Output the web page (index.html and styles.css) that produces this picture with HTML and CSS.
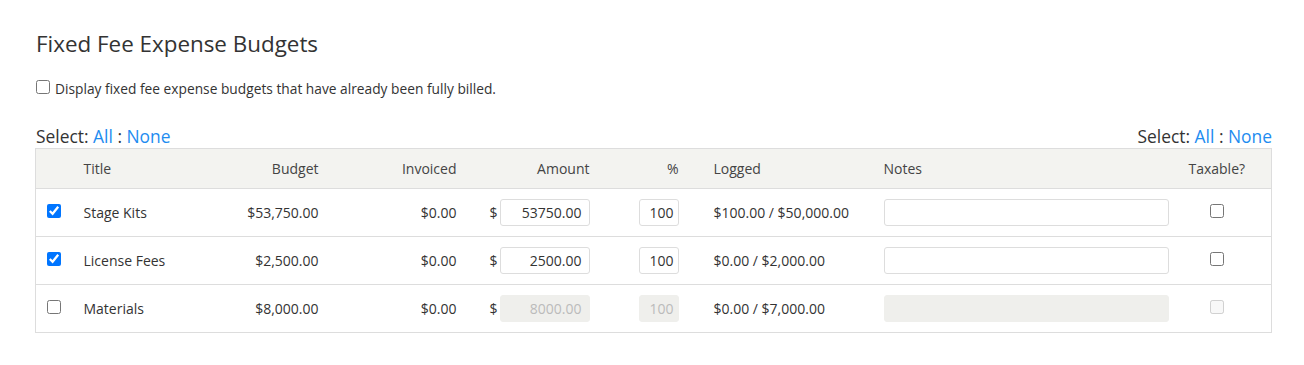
FILE: index.html
```html
<!DOCTYPE html>
<html lang="en">
  <head>
    <meta charset="UTF-8" />
    <title>Fixed Fee Expense Budgets</title>
    <link rel="stylesheet" href="styles.css">
  </head>
  <body>
    <div class="budgets">
      <h2 class="budgets__title">Fixed Fee Expense Budgets</h2>

      <label class="budgets__toggle">
        <input type="checkbox" />
        Display fixed fee expense budgets that have already been fully billed.
      </label>

      <div class="select-bar">
        <span>Select: <a href="#">All</a> : <a href="#">None</a></span>
        <span>Select: <a href="#">All</a> : <a href="#">None</a></span>
      </div>

      <table class="budget-table">
        <thead>
          <tr>
            <th class="col-check"></th>
            <th class="col-title">Title</th>
            <th class="col-budget num">Budget</th>
            <th class="col-invoiced num">Invoiced</th>
            <th class="col-amount num">Amount</th>
            <th class="col-pct num">%</th>
            <th class="col-logged">Logged</th>
            <th class="col-notes">Notes</th>
            <th class="col-tax">Taxable?</th>
          </tr>
        </thead>
        <tbody>
          <tr>
            <td class="col-check"><input type="checkbox" checked /></td>
            <td>Stage Kits</td>
            <td class="num">$53,750.00</td>
            <td class="num">$0.00</td>
            <td class="num"><span class="money"><span class="cur">$</span><input class="field field--amount" type="text" value="53750.00" /></span></td>
            <td class="col-pct num"><input class="field field--pct" type="text" value="100" /></td>
            <td class="col-logged">$100.00 / $50,000.00</td>
            <td><input class="field field--notes" type="text" /></td>
            <td class="col-tax"><input type="checkbox" /></td>
          </tr>
          <tr>
            <td class="col-check"><input type="checkbox" checked /></td>
            <td>License Fees</td>
            <td class="num">$2,500.00</td>
            <td class="num">$0.00</td>
            <td class="num"><span class="money"><span class="cur">$</span><input class="field field--amount" type="text" value="2500.00" /></span></td>
            <td class="col-pct num"><input class="field field--pct" type="text" value="100" /></td>
            <td class="col-logged">$0.00 / $2,000.00</td>
            <td><input class="field field--notes" type="text" /></td>
            <td class="col-tax"><input type="checkbox" /></td>
          </tr>
          <tr>
            <td class="col-check"><input type="checkbox" /></td>
            <td>Materials</td>
            <td class="num">$8,000.00</td>
            <td class="num">$0.00</td>
            <td class="num"><span class="money"><span class="cur">$</span><input class="field field--amount" type="text" value="8000.00" disabled /></span></td>
            <td class="col-pct num"><input class="field field--pct" type="text" value="100" disabled /></td>
            <td class="col-logged">$0.00 / $7,000.00</td>
            <td><input class="field field--notes" type="text" disabled /></td>
            <td class="col-tax"><input type="checkbox" disabled /></td>
          </tr>
        </tbody>
      </table>
    </div>
  </body>
</html>
```

FILE: styles.css
```css
* {
  box-sizing: border-box;
  margin: 0;
  padding: 0;
}
body {
  font-family: "Open Sans", "Liberation Sans", sans-serif;
  color: #333;
  background-color: #fff;
}
a {
  color: #1e8cf0;
  text-decoration: none;
}
input[type="checkbox"] {
  width: 14px;
  height: 14px;
  margin: 0;
}

.budgets {
  padding: 29px 32px 0 35px;
}
.budgets__title {
  font-size: 22.4px;
  font-weight: normal;
  line-height: 30px;
  margin-left: 1px;
}
.budgets__toggle {
  display: flex;
  align-items: center;
  gap: 5px;
  margin-top: 20px;
  margin-left: 1px;
  font-size: 13.75px;
  line-height: 19px;
}
.budgets__toggle input {
  margin-top: -3px;
}

.select-bar {
  display: flex;
  justify-content: space-between;
  margin-top: 26px;
  font-size: 17.4px;
  line-height: 24px;
  padding-left: 1px;
}

.budget-table {
  width: 1237px;
  table-layout: fixed;
  border-collapse: collapse;
  border: 1px solid #ddd;
  font-size: 14px;
}
.budget-table th {
  height: 40px;
  background-color: #f3f3f0;
  font-weight: normal;
  color: #444;
  text-align: left;
  padding: 0 8px;
  border-bottom: 1px solid #ddd;
}
.budget-table td {
  height: 48px;
  padding: 0 8px;
  border-bottom: 1px solid #ddd;
}
.budget-table .num {
  text-align: right;
}

.col-check { width: 40px; }
.col-title { width: 135px; }
.col-budget { width: 116px; }
.col-invoiced { width: 138px; }
.col-amount { width: 133px; }
.col-pct { width: 108px; }
.col-logged { width: 170px; }
.col-notes { width: 301px; }
.col-tax { width: 95px; }

.budget-table .col-check {
  padding-left: 11px;
}
.budget-table .col-check input {
  display: block;
  margin-top: -3px;
}
.budget-table .col-pct {
  padding-right: 27px;
}
.budget-table .col-tax {
  text-align: center;
  padding-right: 22px;
}
.budget-table .col-tax input {
  margin-top: -6px;
  vertical-align: middle;
}

.money {
  display: inline-flex;
  align-items: center;
  gap: 2px;
  vertical-align: middle;
}
.field {
  height: 27px;
  border: 1px solid #ddd;
  border-radius: 3px;
  font-family: inherit;
  font-size: 14px;
  color: #333;
  background-color: #fff;
  vertical-align: middle;
  outline: none;
}
.field:disabled {
  background-color: #efefec;
  border-color: #efefec;
  color: #bbb;
}
.field--amount {
  width: 90px;
  text-align: right;
  padding-right: 7px;
}
.field--pct {
  width: 40px;
  text-align: right;
  padding-right: 4px;
}
.field--notes {
  width: 100%;
  padding: 0 6px;
}
```
